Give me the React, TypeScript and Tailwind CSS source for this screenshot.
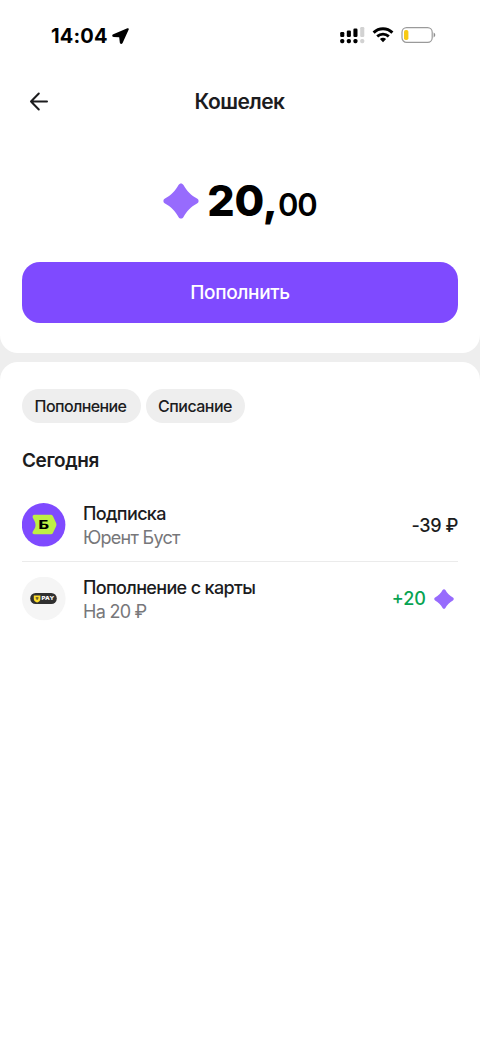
import type { ReactNode } from "react";

function Spark({ className }: { className?: string }) {
  return (
    <svg viewBox="0 0 36 36" className={className} fill="#976bfd">
      <path d="M15.5 2C16.6 -.1 19.4 -.1 20.5 2C23.4 7.6 28.4 12.6 34 15.5C36.1 16.6 36.1 19.4 34 20.5C28.4 23.4 23.4 28.4 20.5 34C19.4 36.1 16.6 36.1 15.5 34C12.6 28.4 7.6 23.4 2 20.5C-.1 19.4 -.1 16.6 2 15.5C7.6 12.6 12.6 7.6 15.5 2Z" />
    </svg>
  );
}

function StatusBar() {
  return (
    <div className="flex h-[70px] items-center pl-[51px] pr-11">
      <span className="pt-0.5 text-[20px] font-bold leading-6 tracking-[0.15px] text-black">14:04</span>
      <svg width="18" height="18" viewBox="0 0 18 18" className="ml-1 mt-px">
        <path
          d="M15.4 1.3L1.3 7.3C-.3 8-.1 9.7 1.7 9.9L7.2 10.3L7.8 15.6C8 17.3 9.8 17.6 10.6 16L16.7 2.6C17.1 1.6 16.4 .9 15.4 1.3Z"
          fill="#000"
        />
      </svg>
      <div className="ml-auto flex items-center">
        <svg width="26" height="18" viewBox="0 0 26 18" className="mt-0.5">
          <rect x="0.2" y="5" width="4.1" height="5" rx="1.2" />
          <rect x="6.8" y="3.5" width="4.1" height="6.5" rx="1.2" />
          <rect x="13.4" y="1.5" width="4.1" height="8.5" rx="1.2" />
          <rect x="20.2" y="0" width="4.1" height="10" rx="1.2" fill="#d2d2d2" />
          <rect x="0.2" y="12" width="4.1" height="4.2" rx="1.6" />
          <rect x="6.8" y="12" width="4.1" height="4.2" rx="1.6" />
          <rect x="13.4" y="12" width="4.1" height="4.2" rx="1.6" />
          <rect x="20.2" y="12" width="4.1" height="4.2" rx="1.6" fill="#d2d2d2" />
        </svg>
        <svg width="22" height="16" viewBox="0 0 22 16" className="ml-1.5" fill="none" stroke="#000">
          <path d="M1.6 5.6C7 .5 15 .5 20.4 5.6" strokeWidth="3" />
          <path d="M5.2 9.4C8.6 6.3 13.4 6.3 16.8 9.4" strokeWidth="2.8" />
          <path d="M7.9 12C9.7 10.4 12.3 10.4 14.1 12L11 15.2Z" fill="#000" stroke="none" />
        </svg>
        <svg width="35" height="18" viewBox="0 0 35 18" className="ml-[7px]">
          <rect x="1" y="1.7" width="30.2" height="14.6" rx="4.6" fill="none" stroke="#9a9a9a" strokeWidth="1.2" />
          <rect x="3" y="4" width="4.4" height="10" rx="1.8" fill="#f8ca14" />
          <path d="M32.6 6.6C34.8 7.4 34.8 10.6 32.6 11.4Z" fill="#8f8f8f" />
        </svg>
      </div>
    </div>
  );
}

function BoostIcon() {
  return (
    <svg width="44" height="44" viewBox="0 0 44 44" className="shrink-0">
      <circle cx="21.6" cy="21.8" r="21.8" fill="#7f4aff" />
      <path
        d="M12.7 11.8H28.5C29.6 11.8 30.3 12.2 30.9 13.1L34 19.8C34.6 21.1 34.6 22.2 34 23.5L30.9 29.9C30.3 30.9 29.6 31.3 28.5 31.3H12.7C10.4 31.3 9.8 29.6 11.1 27.9C13.3 25 13.5 23.8 13.5 21.8C13.5 19.6 12.7 18.4 11 15.3C10 13.4 10.8 11.8 12.7 11.8Z"
        fill="#beef44"
      />
      <text x="21.8" y="25.8" textAnchor="middle" fontFamily="Inter, sans-serif" fontSize="11.4" fontWeight="800" textLength="10.5" lengthAdjust="spacingAndGlyphs">
        Б
      </text>
    </svg>
  );
}

function PayIcon() {
  return (
    <svg width="44" height="44" viewBox="0 0 44 44" className="shrink-0">
      <circle cx="21.8" cy="21.5" r="21.8" fill="#f5f5f5" />
      <rect x="8.2" y="16" width="26.6" height="11" rx="5.5" fill="#303030" />
      <path d="M11.8 18.4H18.4V22C18.4 23.8 16.8 24.8 15.1 25.6C13.4 24.8 11.8 23.8 11.8 22Z" fill="#fddd2d" />
      <path d="M13.7 20.3H16.5V21.5H15.6V22.9H14.6V21.5H13.7Z" fill="#50482a" />
      <text x="19.6" y="23.4" fill="#fff" fontFamily="Inter, sans-serif" fontSize="5.2" fontWeight="800" textLength="12.5" lengthAdjust="spacingAndGlyphs">
        PAY
      </text>
    </svg>
  );
}

interface OperationProps {
  icon: ReactNode;
  title: ReactNode;
  subtitle: ReactNode;
  amount: ReactNode;
}

function Operation({ icon, title, subtitle, amount }: OperationProps) {
  return (
    <div className="flex h-[74px] items-center">
      {icon}
      <div className="ml-[17px] flex-1 pt-0.5">
        <div className="text-[18px] font-medium leading-6 tracking-[-0.65px]">{title}</div>
        <div className="text-[18px] leading-6 tracking-[-0.72px] text-[#77777a]">{subtitle}</div>
      </div>
      {amount}
    </div>
  );
}

export default function App() {
  return (
    <div className="flex min-h-screen flex-col gap-[9px] bg-[#eeeeee] font-[Inter,sans-serif] text-[#1c1c1e]">
      <section className="h-[353px] rounded-b-[18px] bg-white">
        <StatusBar />

        <header className="flex h-[62px] items-center px-[29px]">
          <button className="w-5" aria-label="Назад">
            <svg width="20" height="20" viewBox="0 0 20 20" fill="none" stroke="#1c1c1e" strokeWidth="2" strokeLinecap="round" strokeLinejoin="round">
              <path d="M18 10.5H2M9.8 2.5L2 10.5L9.8 18.5" />
            </svg>
          </button>
          <h1 className="flex-1 pr-[21px] pt-0.5 text-center text-[21px] font-semibold leading-7 tracking-[-0.55px]">
            Кошелек
          </h1>
        </header>

        <div className="flex h-[130px] items-center justify-center text-black">
          <Spark className="mt-2 mr-2 size-9" />
          <div className="mt-[11px] flex items-baseline">
            <span className="text-[43px] font-extrabold leading-[52px] tracking-[-0.1px]">20,</span>
            <span className="text-[31px] font-semibold leading-[52px] tracking-[-1px]">00</span>
          </div>
        </div>

        <div className="px-[22px]">
          <button className="h-[61px] w-full rounded-[18px] bg-[#7f4aff] pt-0.5 text-[19px] font-medium tracking-[-0.35px] text-white">
            Пополнить
          </button>
        </div>
      </section>

      <section className="flex-1 rounded-t-[18px] bg-white px-[22px] pt-[27px]">
        <div className="flex gap-[5px]">
          <button className="h-[34px] w-[119px] rounded-full bg-[#eeeeee] pr-0.5 text-[16px] font-medium tracking-[-0.6px]">
            Пополнение
          </button>
          <button className="h-[34px] w-[99px] rounded-full bg-[#eeeeee] pr-px text-[16px] font-medium tracking-[-0.5px]">
            Списание
          </button>
        </div>

        <h2 className="mt-6 text-[19px] font-semibold leading-7 tracking-[-0.4px]">Сегодня</h2>

        <div className="mt-[13px] divide-y divide-[#ebebeb]">
          <Operation
            icon={<BoostIcon />}
            title="Подписка"
            subtitle="Юрент Буст"
            amount={<span className="pt-0.5 text-[18px] font-medium leading-6 tracking-[-0.4px]">-39 ₽</span>}
          />
          <Operation
            icon={<PayIcon />}
            title="Пополнение с карты"
            subtitle="На 20 ₽"
            amount={
              <span className="flex items-center text-[18px] font-medium leading-6 text-[#07a352]">
                +20
                <Spark className="ml-2 mr-1 size-5" />
              </span>
            }
          />
        </div>
      </section>
    </div>
  );
}
